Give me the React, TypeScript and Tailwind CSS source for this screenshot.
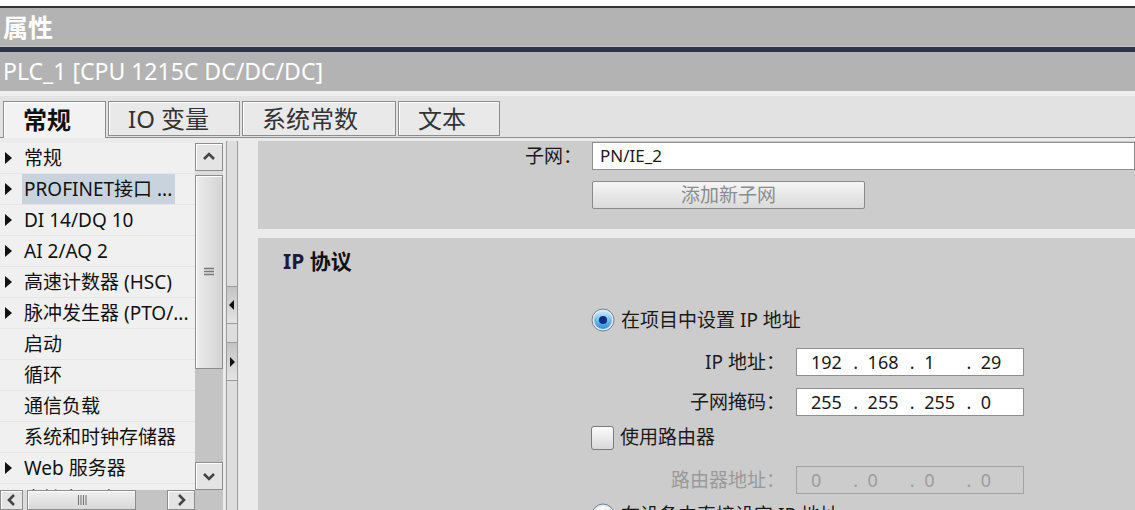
import React from "react";

const treeItems = [
  { label: "常规", arrow: true },
  { label: "PROFINET接口 ...", arrow: true, selected: true },
  { label: "DI 14/DQ 10", arrow: true },
  { label: "AI 2/AQ 2", arrow: true },
  { label: "高速计数器 (HSC)", arrow: true },
  { label: "脉冲发生器 (PTO/...", arrow: true },
  { label: "启动" },
  { label: "循环" },
  { label: "通信负载" },
  { label: "系统和时钟存储器" },
  { label: "Web 服务器", arrow: true },
  { label: "支持多语言" },
];

const tabs = [
  { label: "常规", w: "w-[103px]", active: true },
  { label: "IO 变量", w: "w-[132px]" },
  { label: "系统常数", w: "w-[154px]" },
  { label: "文本", w: "w-[102px]" },
];

const Triangle = () => (
  <svg width="8" height="12" viewBox="0 0 8 12">
    <polygon points="0,0 7,6 0,12" fill="#111" />
  </svg>
);

const Chevron = ({ dir }: { dir: "up" | "down" | "left" | "right" }) => {
  const pts = {
    up: "2,9 7,4 12,9",
    down: "2,5 7,10 12,5",
    left: "9,2 4,7 9,12",
    right: "5,2 10,7 5,12",
  }[dir];
  return (
    <svg width="14" height="14" viewBox="0 0 14 14">
      <polyline points={pts} fill="none" stroke="#444" strokeWidth="2.6" />
    </svg>
  );
};

const ScrollButton = ({ dir, className }: { dir: "up" | "down" | "left" | "right"; className: string }) => (
  <div className={`border border-[#8d8d8d] bg-[#e4e4e4] shadow-[inset_1px_1px_0_#fff] flex items-center justify-center ${className}`}>
    <Chevron dir={dir} />
  </div>
);

const Radio = ({ checked }: { checked?: boolean }) => (
  <svg width="24" height="24" viewBox="0 0 24 24">
    <defs>
      <linearGradient id={checked ? "rb1" : "rb0"} x1="0" y1="0" x2="0" y2="1">
        <stop offset="0" stopColor={checked ? "#c6ebff" : "#fafafa"} />
        <stop offset="1" stopColor={checked ? "#2b90d4" : "#d4d4d4"} />
      </linearGradient>
    </defs>
    <circle cx="12" cy="12" r="11" fill="#e4e8ec" stroke="#74818d" />
    <circle cx="12" cy="12" r="9" fill={`url(#${checked ? "rb1" : "rb0"})`} />
    {checked && <circle cx="12" cy="12" r="4" fill="#0a2f86" />}
  </svg>
);

const Octets = ({ values, disabled }: { values: string[]; disabled?: boolean }) => (
  <div className={`flex items-center h-full pl-[14px] text-[18px] ${disabled ? "text-[#9c9c9c]" : "text-[#1a1a1a]"}`}>
    {values.map((v, i) => (
      <React.Fragment key={i}>
        {i > 0 && <span className="w-[15px]">.</span>}
        <span className="w-[44px]">{v}</span>
      </React.Fragment>
    ))}
  </div>
);

export default function App() {
  return (
    <div className="w-[1135px] h-[510px] overflow-hidden bg-[#ebebeb] font-['Noto_Sans','Noto_Sans_CJK_SC',sans-serif] flex flex-col">
      {/* title bars */}
      <div className="h-[6px] bg-white shrink-0" />
      <div className="h-[2px] bg-[#333] shrink-0" />
      <div className="h-[39px] bg-[#b3b3b3] flex items-center pl-[3px] pt-[2px] text-white text-[25px] font-bold shrink-0 border-b border-[#c4c4c4]">
        属性
      </div>
      <div className="h-[5px] bg-[#2c3448] shrink-0" />
      <div className="h-[39px] bg-[#b3b3b3] flex items-center pl-[3px] text-white text-[23px] shrink-0">
        PLC_1 [CPU 1215C DC/DC/DC]
      </div>
      <div className="h-[5px] bg-[#efefef] shrink-0" />

      {/* tabs */}
      <div className="h-[42px] flex items-end border-b border-[#8c8c8c] bg-[#e2e2e2] pl-[3px] gap-[2px] shrink-0">
        {tabs.map((t) =>
          t.active ? (
            <div
              key={t.label}
              className={`${t.w} h-[37px] -mb-px bg-[#f2f2f2] border border-b-0 border-[#8c8c8c] shadow-[inset_1px_1px_0_#fff] flex items-center pl-[19px] text-[24px] font-bold text-[#111]`}
            >
              {t.label}
            </div>
          ) : (
            <div
              key={t.label}
              className={`${t.w} h-[35px] mb-px bg-[#e9e9e9] border border-[#8c8c8c] shadow-[inset_1px_1px_0_#fff] flex items-center pl-[19px] text-[24px] text-[#333]`}
            >
              {t.label}
            </div>
          )
        )}
      </div>

      {/* body */}
      <div className="flex flex-1 min-h-0">
        {/* tree + scrollbars */}
        <div className="w-[223px] shrink-0 flex flex-col pt-[5px]">
          <div className="flex h-[347px] shrink-0">
            <div className="w-[195px] overflow-hidden bg-[#f0f0f0]">
              {treeItems.map((it) => (
                <div key={it.label} className="h-[31px] flex items-center border-b border-[#e6e6e6] text-[19px] text-[#111] whitespace-nowrap">
                  <div className="w-[22px] pl-[5px] flex items-center">{it.arrow && <Triangle />}</div>
                  <span className={`h-[30px] flex items-center pl-[2px] pr-[3px] ${it.selected ? "bg-[#c9d3dd]" : ""}`}>
                    {it.label}
                  </span>
                </div>
              ))}
            </div>
            <div className="w-[28px] flex flex-col bg-[#dcdcdc]">
              <ScrollButton dir="up" className="h-[28px] shrink-0" />
              <div className="h-[4px] shrink-0" />
              <div className="h-[194px] shrink-0 border border-[#8d8d8d] bg-gradient-to-r from-[#ececec] to-[#d4d4d4] shadow-[inset_1px_1px_0_#fff] flex items-center justify-center">
                <svg width="12" height="10" viewBox="0 0 12 10">
                  <path d="M1 1.5H11M1 4.5H11M1 7.5H11" stroke="#777" strokeWidth="1.3" />
                </svg>
              </div>
              <div className="flex-1 bg-[#c4c4c4]" />
              <ScrollButton dir="down" className="h-[28px] shrink-0" />
            </div>
          </div>
          <div className="flex h-[20px] shrink-0">
            <div className="w-[195px] flex bg-[#c4c4c4]">
              <ScrollButton dir="left" className="w-[23px]" />
              <div className="w-[4px] bg-[#dcdcdc]" />
              <div className="w-[109px] border border-[#8d8d8d] bg-gradient-to-b from-[#f0f0f0] to-[#d8d8d8] shadow-[inset_1px_1px_0_#fff] flex items-center justify-center">
                <svg width="10" height="12" viewBox="0 0 10 12">
                  <path d="M1.5 1V11M4 1V11M6.5 1V11M9 1V11" stroke="#777" strokeWidth="1.1" />
                </svg>
              </div>
              <div className="flex-1" />
              <ScrollButton dir="right" className="w-[28px]" />
            </div>
            <div className="w-[28px] bg-[#c4c4c4]" />
          </div>
        </div>

        {/* splitter */}
        <div className="ml-[3px] mt-[3px] w-[12px] shrink-0 border-x border-[#9a9a9a] bg-[#dedede] flex flex-col">
          <div className="h-[145px] shrink-0" />
          <div className="h-[38px] shrink-0 border-y border-[#9a9a9a] bg-gradient-to-b from-[#c4c4c4] to-[#e4e4e4] flex items-center justify-center">
            <svg width="6" height="10" viewBox="0 0 6 10">
              <polygon points="5,0 0,5 5,10" fill="#111" />
            </svg>
          </div>
          <div className="h-[18px] shrink-0" />
          <div className="h-[39px] shrink-0 border-y border-[#9a9a9a] bg-gradient-to-b from-[#c4c4c4] to-[#e4e4e4] flex items-center justify-center">
            <svg width="6" height="10" viewBox="0 0 6 10">
              <polygon points="1,0 6,5 1,10" fill="#111" />
            </svg>
          </div>
        </div>

        {/* content */}
        <div className="ml-[20px] mt-[3px] flex-1 flex flex-col min-h-0">
          <div className="h-[88px] shrink-0 bg-[#cccccc] flex flex-col pt-px">
            <div className="flex items-center h-[28px] shrink-0">
              <div className="w-[324px] text-right text-[19px] text-[#1a1a1a]">子网：</div>
              <div className="ml-[10px] flex-1 h-[28px] bg-white border border-[#8f8f8f] flex items-center pl-[7px] text-[17px] text-[#1a1a1a]">
                PN/IE_2
              </div>
            </div>
            <div className="mt-[11px] ml-[334px] w-[273px] h-[28px] shrink-0 border border-[#8a8a8a] rounded-[2px] bg-gradient-to-b from-[#f6f6f6] to-[#dadada] flex items-center justify-center text-[19px] text-[#8c8c8c]">
              添加新子网
            </div>
          </div>
          <div className="h-[9px] shrink-0" />
          <div className="flex-1 min-h-0 overflow-hidden bg-[#cccccc] flex flex-col">
            <div className="h-[48px] shrink-0 flex items-center pl-[25px] text-[21px] font-bold text-[#111]">
              <span className="text-[#1d1a3c]">IP</span>&nbsp;协议
            </div>
            <div className="ml-[333px] flex flex-col text-[19px] text-[#1a1a1a]">
              <div className="mt-[22px] h-[24px] shrink-0 flex items-center gap-[6px]">
                <Radio checked />
                <span>在项目中设置 IP 地址</span>
              </div>
              <div className="mt-[16px] h-[28px] shrink-0 flex items-center">
                <div className="w-[194px] text-right">IP 地址：</div>
                <div className="ml-[11px] w-[228px] h-[28px] bg-white border border-[#8f8f8f]">
                  <Octets values={["192", "168", "1", "29"]} />
                </div>
              </div>
              <div className="mt-[12px] h-[28px] shrink-0 flex items-center">
                <div className="w-[194px] text-right">子网掩码：</div>
                <div className="ml-[11px] w-[228px] h-[28px] bg-white border border-[#8f8f8f]">
                  <Octets values={["255", "255", "255", "0"]} />
                </div>
              </div>
              <div className="mt-[9px] h-[25px] shrink-0 flex items-center gap-[6px]">
                <div className="w-[23px] h-[24px] rounded-[3px] border border-[#7a7a7a] bg-gradient-to-b from-[#fbfbfb] to-[#d9d9d9]" />
                <span>使用路由器</span>
              </div>
              <div className="mt-[16px] h-[28px] shrink-0 flex items-center text-[#9a9a9a]">
                <div className="w-[194px] text-right">路由器地址：</div>
                <div className="ml-[11px] w-[228px] h-[28px] bg-[#cccccc] border border-[#a3a3a3]">
                  <Octets values={["0", "0", "0", "0"]} disabled />
                </div>
              </div>
              <div className="mt-[9px] h-[24px] shrink-0 flex items-center gap-[6px]">
                <Radio />
                <span>在设备中直接设定 IP 地址</span>
              </div>
            </div>
          </div>
        </div>
      </div>
    </div>
  );
}
